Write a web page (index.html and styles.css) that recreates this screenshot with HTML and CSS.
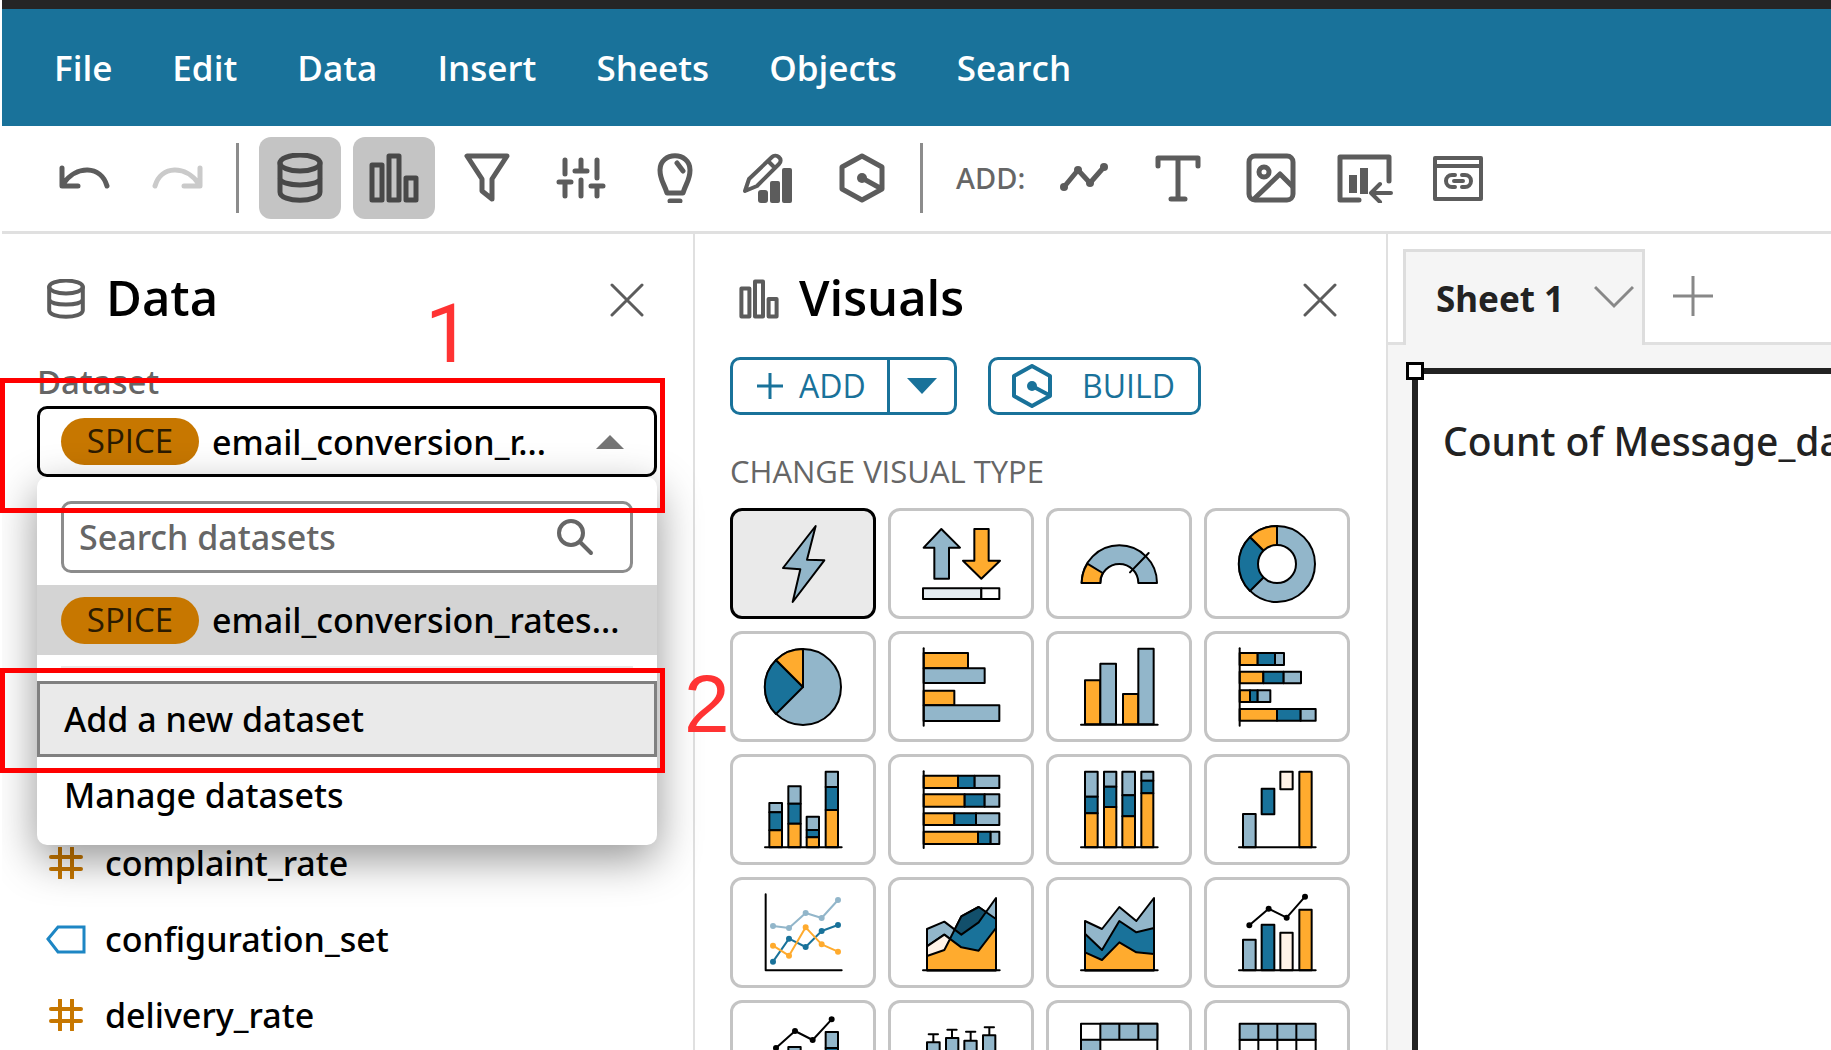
FILE: index.html
```html
<!DOCTYPE html>
<html lang="en">
<head>
<meta charset="utf-8">
<title>Analysis</title>
<link rel="stylesheet" href="styles.css">
</head>
<body>
<div class="window-edge"></div>
<nav class="menubar">
  <a href="#file">File</a><a href="#edit">Edit</a><a href="#data">Data</a><a href="#insert">Insert</a><a href="#sheets">Sheets</a><a href="#objects">Objects</a><a href="#search">Search</a>
</nav>

<div class="toolbar">
  <div class="history">
    <button class="tool-plain" aria-label="Undo"><svg width="52" height="26" viewBox="0 0 52 26"><path d="M4 3V21H20M5 19C18 0 43 0 49 21" class="ln"/></svg></button>
    <button class="tool-plain faded" aria-label="Redo"><svg width="52" height="26" viewBox="0 0 52 26"><path d="M48 3V21H32M47 19C34 0 9 0 3 21" class="ln"/></svg></button>
  </div>
  <div class="rule"></div>
  <div class="tools">
    <button class="tool on" aria-label="Data"><svg width="50" height="50" viewBox="0 0 50 50"><g class="ln"><ellipse cx="25" cy="10" rx="20" ry="8"/><path d="M5 10V39C5 50 45 50 45 39V10M5 26C9 34 41 34 45 26"/></g></svg></button>
    <button class="tool on" aria-label="Visuals"><svg width="50" height="50" viewBox="0 0 50 50"><g class="ln"><rect x="3" y="12" width="10" height="35"/><rect x="20" y="3" width="10" height="44"/><rect x="37" y="25" width="10" height="22"/></g></svg></button>
    <button class="tool" aria-label="Filter"><svg width="50" height="50" viewBox="0 0 50 50"><path class="ln" d="M5 3H45L30 26V46L20 38V26Z"/></svg></button>
    <button class="tool" aria-label="Parameters"><svg width="50" height="50" viewBox="0 0 50 50"><path class="ln" d="M9 7V21M9 31V43M3 29H15M25 7V18M19 18H31M25 27V43M41 7V25M41 34V43M35 33H47"/></svg></button>
    <button class="tool" aria-label="Actions"><svg width="50" height="50" viewBox="0 0 50 50"><path class="ln" d="M17 40C14 30 10 27 10 17C10 -2 40 -2 40 17C40 27 36 30 33 40ZM27 10L33 18M20 48H30"/></svg></button>
    <button class="tool" aria-label="Themes"><svg width="50" height="50" viewBox="0 0 50 50"><path class="ln thin" d="M2 38L6 26L29 4C33 0 41 6 36 11L14 33ZM25 8L32 15"/><rect class="fl" x="15" y="37" width="10" height="13" rx="3"/><rect class="fl" x="27" y="28" width="10" height="22" rx="2"/><rect class="fl" x="39" y="15" width="10" height="35" rx="2"/></svg></button>
    <button class="tool" aria-label="Build"><svg width="50" height="50" viewBox="0 0 50 50"><path class="ln" d="M25 3L45 14V36L25 47L5 36V14ZM25 25L43 35"/><circle class="fl" cx="25" cy="25" r="5"/></svg></button>
  </div>
  <div class="rule"></div>
  <span class="add-label">ADD:</span>
  <div class="tools adders">
    <button class="tool" aria-label="Add line"><svg width="50" height="50" viewBox="0 0 50 50"><path class="ln" d="M5 34L19 17L31 30L45 14"/><g class="fl"><circle cx="5" cy="34" r="4"/><circle cx="19" cy="17" r="4"/><circle cx="31" cy="30" r="4"/><circle cx="45" cy="14" r="4"/></g></svg></button>
    <button class="tool" aria-label="Add text"><svg width="50" height="50" viewBox="0 0 50 50"><path class="ln" d="M5 13V5H45V13M25 5V45M18 46H32"/></svg></button>
    <button class="tool" aria-label="Add image"><svg width="50" height="50" viewBox="0 0 50 50"><rect class="ln" x="3" y="3" width="44" height="44" rx="6"/><circle class="ln" cx="18" cy="19" r="5"/><path class="ln" d="M8 46L34 21L46 33"/></svg></button>
    <button class="tool" aria-label="Add visual from sheet"><svg width="56" height="50" viewBox="0 0 56 50"><path class="ln" d="M22 47H3V4H52V28"/><g class="fl"><rect x="12" y="22" width="8" height="18"/><rect x="23" y="15" width="8" height="26"/></g><path class="ln thin" d="M54 40H34M43 31L34 40L43 49"/></svg></button>
    <button class="tool" aria-label="Add embedded page"><svg width="50" height="50" viewBox="0 0 50 50"><g class="ln thin"><rect x="2" y="5" width="46" height="41"/><path d="M2 13H48M22 22H19A6 6 0 0 0 19 34H22M29 22H32A6 6 0 0 1 32 34H29M21 28H30"/></g></svg></button>
  </div>
</div>

<main class="workspace">
  <section class="panel">
    <header class="panel-head">
      <svg class="head-icon" width="40" height="40" viewBox="0 0 50 50"><g class="ln"><ellipse cx="25" cy="10" rx="21" ry="8"/><path d="M4 10V39C4 50 46 50 46 39V10M4 26C8 34 42 34 46 26"/></g></svg>
      <h2>Data</h2>
      <button class="close" aria-label="Close data panel"><svg width="34" height="34" viewBox="0 0 34 34"><path class="ln fine" d="M2 2L32 32M32 2L2 32"/></svg></button>
    </header>
    <label class="field-label" for="dataset">Dataset</label>
    <div class="dataset">
      <div class="picker">
        <span class="pill">SPICE</span>
        <select id="dataset"><option>email_conversion_r...</option></select>
        <svg class="caret" width="28" height="14" viewBox="0 0 28 14"><path d="M0 14L14 0L28 14Z"/></svg>
      </div>
      <div class="dropdown">
        <div class="search">
          <input type="text" placeholder="Search datasets" aria-label="Search datasets">
          <svg width="38" height="38" viewBox="0 0 38 38"><circle class="ln thin" cx="15" cy="15" r="12"/><path class="ln thin" d="M24 24L35 35"/></svg>
        </div>
        <button class="option current"><span class="pill">SPICE</span>email_conversion_rates...</button>
        <hr>
        <button class="option command focused">Add a new dataset</button>
        <button class="option command">Manage datasets</button>
      </div>
    </div>
    <ul class="fields">
      <li><svg width="40" height="32" viewBox="0 0 40 32"><path class="measure" d="M14 1V31M26 1V31M5 10H35M5 22H35"/></svg>complaint_rate</li>
      <li><svg width="40" height="32" viewBox="0 0 40 32"><path class="dimension" d="M2 16L12 4H38V29H12Z"/></svg>configuration_set</li>
      <li><svg width="40" height="32" viewBox="0 0 40 32"><path class="measure" d="M14 1V31M26 1V31M5 10H35M5 22H35"/></svg>delivery_rate</li>
    </ul>
  </section>

  <section class="panel">
    <header class="panel-head">
      <svg class="head-icon" width="40" height="40" viewBox="0 0 50 50"><g class="ln"><rect x="3" y="12" width="10" height="35"/><rect x="20" y="3" width="10" height="44"/><rect x="37" y="25" width="10" height="22"/></g></svg>
      <h2>Visuals</h2>
      <button class="close" aria-label="Close visuals panel"><svg width="34" height="34" viewBox="0 0 34 34"><path class="ln fine" d="M2 2L32 32M32 2L2 32"/></svg></button>
    </header>
    <div class="actions">
      <div class="split">
        <button class="add"><svg width="26" height="26" viewBox="0 0 26 26"><path class="ac" d="M13 0V26M0 13H26"/></svg>ADD</button>
        <button class="more" aria-label="More add options"><svg width="30" height="16" viewBox="0 0 30 16"><path class="af" d="M0 0H30L15 16Z"/></svg></button>
      </div>
      <button class="build"><svg width="42" height="44" viewBox="0 0 42 44"><path class="ac bold" d="M21 2L39 12V32L21 42L3 32V12ZM21 22L38 31"/><circle class="af" cx="21" cy="22" r="5"/></svg>BUILD</button>
    </div>
    <h3>CHANGE VISUAL TYPE</h3>
    <div class="types">
      <button class="type picked" aria-label="AutoGraph"><svg viewBox="0 0 240 240"><path class="l" d="M158 6L132 107L184 109L89 234L112 136L60 132Z"/></svg></button>
      <button class="type" aria-label="KPI"><svg viewBox="0 0 240 240"><path class="l" d="M61 15L117 71H84V164H40V71H8Z"/><path class="o" d="M160 15H203V110H237L181 164L126 110H160Z"/><path class="p" d="M6 193H181V225H6Z"/><path class="w" d="M181 193H235V225H181Z"/></svg></button>
      <button class="type" aria-label="Gauge"><svg viewBox="0 0 240 240"><path class="l" d="M8 177A113 113 0 0 1 234 177H178A57 57 0 0 0 64 177Z"/><path class="o" d="M8 177A113 113 0 0 1 25 119L71 147A57 57 0 0 0 64 177Z"/><path class="n" d="M209 87L153 145"/></svg></button>
      <button class="type" aria-label="Donut"><svg viewBox="0 0 240 240"><circle class="l" cx="120" cy="120" r="114"/><path class="d" d="M120 120L39 39A114 114 0 0 0 39 201Z"/><path class="o" d="M120 120V6A114 114 0 0 0 39 39Z"/><circle class="w" cx="120" cy="120" r="57"/></svg></button>

      <button class="type" aria-label="Pie"><svg viewBox="0 0 240 240"><circle class="l" cx="120" cy="120" r="114"/><path class="d" d="M120 120L39 39A114 114 0 0 0 39 201Z"/><path class="o" d="M120 120V6A114 114 0 0 0 39 39Z"/></svg></button>
      <button class="type" aria-label="Horizontal bar"><svg viewBox="0 0 240 240"><path class="o" d="M8 18H141V64H8ZM8 131H100V175H8Z"/><path class="l" d="M8 64H191V108H8ZM8 175H235V222H8Z"/><path class="n" d="M8 4V236"/></svg></button>
      <button class="type" aria-label="Vertical bar"><svg viewBox="0 0 240 240"><path class="o" d="M18 100H64V232H18ZM132 141H178V232H132Z"/><path class="l" d="M64 50H111V232H64ZM178 5H224V232H178Z"/><path class="n" d="M6 233H236"/></svg></button>
      <button class="type" aria-label="Stacked horizontal bar"><svg viewBox="0 0 240 240"><path class="o" d="M8 18H62V54H8ZM8 74H79V109H8ZM8 130H39V165H8ZM8 186H120V221H8Z"/><path class="d" d="M62 18H114V54H62ZM79 74H140V109H79ZM39 130H62V165H39ZM120 186H191V221H120Z"/><path class="l" d="M114 18H141V54H114ZM140 74H192V109H140ZM62 130H100V165H62ZM191 186H236V221H191Z"/><path class="n" d="M8 4V236"/></svg></button>

      <button class="type" aria-label="Stacked vertical bar"><svg viewBox="0 0 240 240"><path class="l" d="M19 99H57V127H19ZM76 49H113V101H76ZM131 140H168V180H131ZM188 5H225V51H188Z"/><path class="d" d="M19 127H57V181H19ZM76 101H113V161H76ZM131 180H168V202H131ZM188 51H225V120H188Z"/><path class="o" d="M19 181H57V232H19ZM76 161H113V232H76ZM131 202H168V232H131ZM188 120H225V232H188Z"/><path class="n" d="M6 232H236"/></svg></button>
      <button class="type" aria-label="Stacked 100% horizontal bar"><svg viewBox="0 0 240 240"><path class="o" d="M8 17H111V54H8ZM8 73H131V110H8ZM8 130H100V165H8ZM8 185H171V222H8Z"/><path class="d" d="M111 17H161V54H111ZM131 73H191V110H131ZM100 130H165V165H100ZM171 185H209V222H171Z"/><path class="l" d="M161 17H235V54H161ZM191 73H235V110H191ZM165 130H235V165H165ZM209 185H235V222H209Z"/><path class="n" d="M8 4V234"/></svg></button>
      <button class="type" aria-label="Stacked 100% vertical bar"><svg viewBox="0 0 240 240"><path class="l" d="M18 5H56V80H18ZM75 5H112V50H75ZM130 5H168V76H130ZM187 5H223V32H187Z"/><path class="d" d="M18 80H56V130H18ZM75 50H112V111H75ZM130 76H168V139H130ZM187 32H223V70H187Z"/><path class="o" d="M18 130H56V232H18ZM75 111H112V232H75ZM130 139H168V232H130ZM187 70H223V232H187Z"/><path class="n" d="M6 232H236"/></svg></button>
      <button class="type" aria-label="Waterfall"><svg viewBox="0 0 240 240"><path class="l" d="M18 132H56V232H18Z"/><path class="d" d="M74 56H112V133H74Z"/><path class="c" d="M130 5H167V58H130Z"/><path class="o" d="M187 5H224V232H187Z"/><path class="n" d="M6 232H236"/></svg></button>

      <button class="type" aria-label="Line"><svg viewBox="0 0 240 240"><g class="series light"><path d="M30 99L78 105L128 60L176 75L225 21"/><circle cx="30" cy="99" r="6"/><circle cx="78" cy="105" r="6"/><circle cx="128" cy="60" r="6"/><circle cx="176" cy="75" r="6"/><circle cx="225" cy="21" r="6"/></g><g class="series dark"><path d="M30 206L78 137L128 162L176 114L225 96"/><circle cx="30" cy="206" r="6"/><circle cx="78" cy="137" r="6"/><circle cx="128" cy="162" r="6"/><circle cx="176" cy="114" r="6"/><circle cx="225" cy="96" r="6"/></g><g class="series orange"><path d="M30 158L78 188L128 103L176 154L225 176"/><circle cx="30" cy="158" r="6"/><circle cx="78" cy="188" r="6"/><circle cx="128" cy="103" r="6"/><circle cx="176" cy="154" r="6"/><circle cx="225" cy="176" r="6"/></g><path class="n" d="M8 4V232H236"/></svg></button>
      <button class="type" aria-label="Area"><svg viewBox="0 0 240 240"><path class="l" d="M18 108L70 86L121 125L173 88L225 15V232H18Z"/><path class="d" d="M18 189L70 171L121 70L173 42L225 78V232H18Z"/><path class="o" d="M18 160L70 125L121 163L173 173L225 105V232H18Z"/><path class="deep" d="M101 110L121 70L173 42L195 57L173 88L121 125Z"/><path class="c" d="M18 160L70 125L87 138L70 171L18 189Z"/><path class="n" d="M6 232H236"/></svg></button>
      <button class="type" aria-label="Stacked area"><svg viewBox="0 0 240 240"><path class="l" d="M18 84L69 108L121 42L172 84L225 15V232H18Z"/><path class="d" d="M18 122L69 171L121 84L172 118L225 105V232H18Z"/><path class="o" d="M18 178L69 201L121 148L172 178L225 183V232H18Z"/><path class="n" d="M6 232H236"/></svg></button>
      <button class="type" aria-label="Clustered bar combo"><svg viewBox="0 0 240 240"><path class="l" d="M18 140H56V232H18Z"/><path class="d" d="M74 95H112V232H74Z"/><path class="c" d="M130 119H167V232H130Z"/><path class="o" d="M187 50H224V232H187Z"/><path class="n" d="M6 232H236"/><g class="series black"><path d="M37 97L95 47L149 74L204 11"/><circle cx="37" cy="97" r="6"/><circle cx="95" cy="47" r="6"/><circle cx="149" cy="74" r="6"/><circle cx="204" cy="11" r="6"/></g></svg></button>

      <button class="type" aria-label="Stacked bar combo"><svg viewBox="0 0 240 240"><path class="l" d="M19 140H57V170H19ZM76 93H113V140H76ZM131 120H168V160H131ZM188 48H225V96H188Z"/><path class="d" d="M188 96H225V150H188Z"/><path class="o" d="M19 170H57V232H19ZM76 140H113V232H76ZM131 160H168V232H131ZM188 150H225V232H188Z"/><g class="series black"><path d="M39 96L96 45L149 72L206 10"/><circle cx="39" cy="96" r="6"/><circle cx="96" cy="45" r="6"/><circle cx="149" cy="72" r="6"/><circle cx="206" cy="10" r="6"/></g></svg></button>
      <button class="type" aria-label="Box plot"><svg viewBox="0 0 240 240"><path class="n" d="M37 55V79M23 55H51M93 41V66M79 41H107M149 47V74M135 47H163M205 34V58M191 34H219"/><path class="l" d="M18 79H56V170H18ZM75 66H112V160H75ZM130 74H167V165H130ZM186 58H223V150H186Z"/></svg></button>
      <button class="type" aria-label="Pivot table"><svg viewBox="0 0 240 240"><path class="w" d="M6 23H235V220H6Z"/><path class="l" d="M64 23H121V71H64ZM121 23H178V71H121ZM178 23H235V71H178ZM6 71H64V120H6ZM6 120H64V170H6Z"/></svg></button>
      <button class="type" aria-label="Table"><svg viewBox="0 0 240 240"><path class="w" d="M8 71H236V220H8ZM64 71V220M121 71V220M178 71V220"/><path class="l" d="M8 23H64V71H8ZM64 23H121V71H64ZM121 23H178V71H121ZM178 23H236V71H178Z"/></svg></button>
    </div>
  </section>

  <section class="sheet">
    <div class="tabs">
      <button class="tab">Sheet 1<svg width="40" height="24" viewBox="0 0 40 24"><path class="soft" d="M1 2L20 21L39 2"/></svg></button>
      <button class="new-tab" aria-label="Add sheet"><svg width="40" height="40" viewBox="0 0 40 40"><path class="soft" d="M20 0V40M0 20H40"/></svg></button>
    </div>
    <div class="canvas">
      <div class="visual"><span class="handle"></span><h1>Count of Message_date</h1></div>
    </div>
  </section>
</main>

<div class="mark mark-one"></div>
<div class="mark mark-two"></div>
<span class="step step-one">1</span>
<span class="step step-two">2</span>
</body>
</html>
```
FILE: styles.css
```css
* { box-sizing: border-box; }

body {
  margin: 0;
  padding-left: 2px;
  height: 100vh;
  overflow: hidden;
  position: relative;
  display: flex;
  flex-direction: column;
  background: #fff;
  color: #000;
  font: 500 34px/40px "Noto Sans", "Open Sans", sans-serif;
}

button, input, select { font: inherit; color: inherit; margin: 0; }
button { background: none; border: 0; padding: 0; cursor: pointer; }
svg { display: block; flex: none; }
h1, h2, h3 { margin: 0; font-weight: 500; }

.ln { fill: none; stroke: currentColor; stroke-width: 5; stroke-linejoin: round; stroke-linecap: round; }
.ln.thin { stroke-width: 4; }
.ln.fine { stroke-width: 3; }
.fl { fill: currentColor; }

.window-edge { flex: none; height: 9px; background: #252525; }

.menubar {
  flex: none;
  height: 117px;
  padding-left: 52px;
  display: flex;
  align-items: center;
  gap: 60px;
  background: #19729a;
  font-family: "Open Sans", sans-serif;
  font-size: 35px;
  font-weight: 600;
}
.menubar a { color: #fff; text-decoration: none; }

.toolbar {
  flex: none;
  height: 108px;
  padding: 0 0 2px 56px;
  display: flex;
  align-items: center;
  border-bottom: 3px solid #e0e0e0;
  color: #5c5c5c;
}
.history { display: flex; gap: 42px; margin-right: 32px; }
.faded { color: #cacaca; }
.rule { flex: none; width: 3px; height: 70px; background: #8c8c8c; }
.tools { display: flex; justify-content: space-between; width: 644px; margin: 0 17px 0 20px; }
.adders { width: 456px; margin: 0 0 0 17px; }
.tool { width: 82px; height: 82px; border-radius: 12px; display: flex; align-items: center; justify-content: center; }
.tool.on { background: #c4c4c4; color: #484848; }
.add-label { width: 70px; margin-left: 33px; font-size: 29px; color: #666; }

.workspace { flex: 1; min-height: 0; display: flex; overflow: hidden; }
.panel { flex: 0 0 693px; padding: 14px 36px 0 35px; border-right: 2px solid #e0e0e0; display: flex; flex-direction: column; }
.panel-head { flex: none; height: 98px; padding: 0 13px 0 9px; display: flex; align-items: center; }
.panel-head h2 { flex: 1; font: 600 49px/64px "Open Sans", sans-serif; margin-left: 20px; }
.panel-head svg { color: #5c5c5c; }
.head-icon { margin-top: 3px; }
.close { margin-top: 5px; }

.field-label { margin: 16px 0 4px; font-size: 33px; color: #666; }
.dataset { position: relative; }
.picker {
  height: 71px;
  padding: 0 30px 0 21px;
  display: flex;
  align-items: center;
  gap: 13px;
  border: 3px solid #000;
  border-radius: 10px;
}
.picker select { flex: 1; min-width: 0; appearance: none; border: 0; padding: 0; background: none; outline: 0; }
.pill {
  flex: none;
  width: 138px;
  height: 47px;
  border-radius: 24px;
  background: #c77700;
  color: #2b1b00;
  font: 500 33px/45px "Open Sans", sans-serif;
  text-align: center;
}
.caret { fill: #757575; }

.dropdown {
  position: absolute;
  top: 100%;
  left: 0;
  right: 0;
  padding: 24px 0 12px;
  background: #fff;
  border-radius: 10px;
  box-shadow: 0 14px 44px rgba(0, 0, 0, .42);
}
.search {
  height: 72px;
  margin: 0 24px 12px;
  padding: 0 36px 0 15px;
  display: flex;
  align-items: center;
  border: 3px solid #8c8c8c;
  border-radius: 10px;
  color: #666;
}
.search input { flex: 1; min-width: 0; border: 0; padding: 0; outline: 0; background: none; }
.search input::placeholder { color: #666; opacity: 1; }
.option { width: 100%; height: 76px; display: flex; align-items: center; text-align: left; }
.option.current { height: 70px; padding: 0 24px; gap: 13px; background: #d4d4d4; }
.dropdown hr { margin: 11px 24px 13px; border: 0; border-top: 2px solid #e8e8e8; }
.command { border: 3px solid transparent; padding: 0 24px; }
.focused { background: #eaeaea; border-color: #808080; }

.fields { list-style: none; margin: 348px 0 0; padding: 0 0 0 9px; }
.fields li { height: 76px; display: flex; align-items: center; gap: 19px; }
.measure { fill: none; stroke: #c77700; stroke-width: 4; stroke-linecap: round; }
.dimension { fill: none; stroke: #1d86c4; stroke-width: 3; }

.actions { display: flex; gap: 31px; margin: 11px 0 36px; height: 58px; flex: none; color: #19729a; }
.actions button { font: 500 32px/40px "Open Sans", sans-serif; }
.split, .build { display: flex; border: 3px solid #19729a; border-radius: 10px; }
.add { display: flex; align-items: center; gap: 16px; width: 154px; padding-left: 24px; }
.actions .more { display: flex; align-items: center; justify-content: center; width: 67px; border-left: 3px solid #19729a; }
.actions .build { align-items: center; gap: 29px; width: 213px; padding-left: 20px; border: 3px solid #19729a; }
.ac { fill: none; stroke: #19729a; stroke-width: 3; stroke-linejoin: round; }
.ac.bold { stroke-width: 4; }
.af { fill: #19729a; }
.panel h3 { font: 500 31px/40px "Open Sans", sans-serif; color: #666; margin-bottom: 17px; }

.types { display: grid; grid-template-columns: repeat(4, 1fr); gap: 12px; }
.type { height: 111px; display: flex; align-items: center; justify-content: center; border: 3px solid #c4c4c4; border-radius: 12px; background: #fff; }
.type.picked { background: #eaeaea; border-color: #000; }
.type svg { width: 80px; height: 80px; stroke: #000; stroke-width: 6; stroke-linejoin: round; stroke-linecap: round; }
.l { fill: #92b6ca; }
.d { fill: #19729a; }
.o { fill: #ffab2e; }
.w { fill: #fff; }
.p { fill: #e5edf2; }
.c { fill: #fff3e8; }
.n { fill: none; }
.deep { fill: #124f6b; }
.series path { fill: none; }
.series.light { fill: #92b6ca; stroke: #92b6ca; }
.series.dark { fill: #19729a; stroke: #19729a; }
.series.orange { fill: #ffab2e; stroke: #ffab2e; }
.series.black { fill: #000; }

.sheet { flex: 1; min-width: 0; display: flex; flex-direction: column; background: #f5f5f5; color: #222; }
.tabs { flex: none; height: 111px; padding: 15px 0 0 15px; display: flex; background: #fff; border-bottom: 3px solid #e0e0e0; }
.tab {
  height: 96px;
  width: 242px;
  padding: 0 8px 0 30px;
  display: flex;
  align-items: center;
  justify-content: space-between;
  background: #f5f5f5;
  border: 3px solid #ddd;
  border-bottom: 0;
  font-size: 35px;
  font-weight: 700;
}
.tab svg { margin-bottom: 4px; }
.new-tab { margin: 0 0 0 28px; height: 93px; }
.soft { fill: none; stroke: #888; stroke-width: 3; }
.canvas { flex: 1; min-height: 0; padding: 23px 0 0 24px; display: flex; }
.visual { flex: 1; min-width: 0; position: relative; padding: 42px 0 0 25px; background: #fff; border: solid #222; border-width: 6px 0 0 6px; }
.visual h1 { font-size: 39px; line-height: 50px; white-space: nowrap; }
.handle { position: absolute; left: -12px; top: -12px; width: 18px; height: 18px; background: #fff; border: 3px solid #000; }

.mark { position: absolute; left: 0; width: 665px; border: 5px solid #f00; }
.mark-one { top: 378px; height: 135px; }
.mark-two { top: 668px; height: 105px; }
.step { position: absolute; color: #f33; font: 400 82px/80px "Liberation Sans", Arial, sans-serif; }
.step-one { left: 425px; top: 294px; font-family: Roboto, sans-serif; }
.step-two { left: 684px; top: 664px; }
```
